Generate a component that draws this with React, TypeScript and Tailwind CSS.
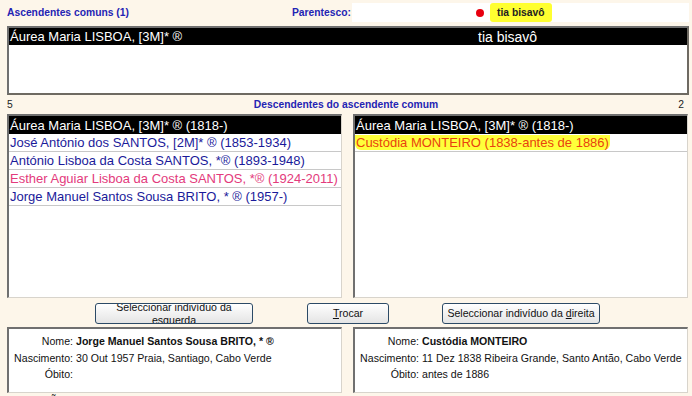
import React from 'react';

type Row = { text: string; color: string; selected?: boolean; marked?: boolean };

const leftRows: Row[] = [
  { text: 'Áurea Maria LISBOA, [3M]* ® (1818-)', color: '#ffffff', selected: true },
  { text: 'José António dos SANTOS, [2M]* ® (1853-1934)', color: '#1a1a9a' },
  { text: 'António Lisboa da Costa SANTOS, *® (1893-1948)', color: '#1a1a9a' },
  { text: 'Esther Aguiar Lisboa da Costa SANTOS, *® (1924-2011)', color: '#e33a7c' },
  { text: 'Jorge Manuel Santos Sousa BRITO, * ® (1957-)', color: '#1a1a9a' },
];

const rightRows: Row[] = [
  { text: 'Áurea Maria LISBOA, [3M]* ® (1818-)', color: '#ffffff', selected: true },
  { text: 'Custódia MONTEIRO (1838-antes de 1886)', color: '#e8420e', marked: true },
];

const sunken =
  'bg-white border-l-2 border-t-2 border-l-[#707070] border-t-[#707070] border-r border-b border-r-[#d8d4cc] border-b-[#d8d4cc]';

function PersonList({ rows }: { rows: Row[] }) {
  return (
    <div className={'w-[335px] h-full overflow-hidden ' + sunken}>
      {rows.map((r, i) => (
        <div
          key={i}
          className={
            'h-[18px] flex items-center pl-[1px] text-[13px] leading-none whitespace-nowrap ' +
            (r.selected ? 'bg-black' : 'border-b border-[#c8c8c8]')
          }
          style={{ color: r.color }}
        >
          <span className={r.marked ? 'bg-[#ffff3a] rounded-b-[6px] px-[1px] -ml-[1px] py-[1px]' : ''}>{r.text}</span>
        </div>
      ))}
    </div>
  );
}

function Detail({ name, birth, death }: { name: string; birth: string; death: string }) {
  return (
    <div className={'w-[335px] h-full overflow-hidden pt-[5px] text-[10.6px] text-[#111] ' + sunken}>
      <div className="grid grid-cols-[64px_1fr] gap-x-[3px] gap-y-[2.5px] leading-[14px]">
        <div className="text-right whitespace-nowrap">Nome:</div>
        <div className="font-bold whitespace-nowrap">{name}</div>
        <div className="text-right whitespace-nowrap">Nascimento:</div>
        <div className="whitespace-nowrap">{birth}</div>
        <div className="text-right whitespace-nowrap">Óbito:</div>
        <div className="whitespace-nowrap">{death}</div>
      </div>
    </div>
  );
}

function Btn({ children, className }: { children: React.ReactNode; className: string }) {
  return (
    <div
      className={
        'h-[21px] shrink-0 rounded-[3px] border border-[#2c4a66] bg-gradient-to-b from-white to-[#e4e4e4] flex items-center justify-center text-[10.6px] text-[#111] overflow-hidden whitespace-nowrap ' +
        className
      }
    >
      {children}
    </div>
  );
}

export default function App() {
  return (
    <div
      className="w-[692px] h-[396px] bg-[#fdf6ea] overflow-hidden flex flex-col"
      style={{ fontFamily: '"Liberation Sans", Arial, sans-serif' }}
    >
      {/* header */}
      <div className="h-[26px] shrink-0 flex items-start pt-[3px] pl-[7px] pr-[3px]">
        <div className="w-[285px] shrink-0 h-[19px] flex items-center text-[10.3px] font-bold text-[#2424b4] whitespace-nowrap">
          Ascendentes comuns (1)
        </div>
        <div className="w-[60px] shrink-0 h-[19px] flex items-center text-[10.3px] font-bold text-[#2424b4] whitespace-nowrap">
          Parentesco:
        </div>
        <div className="flex-1 h-[19px] bg-white flex items-center pl-[124px]">
          <span className="w-[8px] h-[8px] rounded-full bg-[#e8000f]" />
          <span className="ml-[6px] h-[19px] px-[7px] bg-[#ffff30] rounded-[3px] flex items-center text-[10.3px] font-bold text-[#222]">
            tia bisavô
          </span>
        </div>
      </div>

      {/* common ancestors */}
      <div className="shrink-0 mx-[7px] w-[682px] h-[69px] bg-white border-2 border-t-[#707070] border-l-[#707070] border-r-[#6e6a62] border-b-[#6e6a62]">
        <div className="h-[17px] bg-black text-white text-[13px] leading-none flex items-center whitespace-nowrap">
          <span className="w-[469px] pl-[1px]">Áurea Maria LISBOA, [3M]* ®</span>
          <span className="text-[14px]">tia bisavô</span>
        </div>
      </div>

      {/* counts row */}
      <div className="h-[19px] shrink-0 flex items-center justify-between px-[7px] text-[10.3px] font-bold">
        <span className="w-[20px] text-[#222] font-normal">5</span>
        <span className="text-[#2424b4]">Descendentes do ascendente comum</span>
        <span className="w-[20px] text-right text-[#222] font-normal pr-[1px]">2</span>
      </div>

      {/* lists */}
      <div className="h-[184px] shrink-0 flex gap-[11px] pl-[7px]">
        <PersonList rows={leftRows} />
        <PersonList rows={rightRows} />
      </div>

      {/* buttons */}
      <div className="h-[29px] shrink-0 flex items-start pt-[5px]">
        <Btn className="ml-[95px] w-[158px] flex-col leading-[13px] justify-start">
          <span className="-mt-[3px]">Seleccionar indivíduo da</span>
          <span>
            es<span className="underline">q</span>uerda
          </span>
        </Btn>
        <Btn className="ml-[54px] w-[82px]">
          <span>
            <span className="underline">T</span>rocar
          </span>
        </Btn>
        <Btn className="ml-[53px] w-[158px]">
          <span>
            Seleccionar indivíduo da <span className="underline">d</span>ireita
          </span>
        </Btn>
      </div>

      {/* details */}
      <div className="h-[66px] shrink-0 flex gap-[11px] pl-[7px]">
        <Detail name="Jorge Manuel Santos Sousa BRITO, * ®" birth="30 Out 1957 Praia, Santiago, Cabo Verde" death="" />
        <Detail name="Custódia MONTEIRO" birth="11 Dez 1838 Ribeira Grande, Santo Antão, Cabo Verde" death="antes de 1886" />
      </div>
      <div className="shrink-0 pl-[50px] text-[11px] text-[#222] leading-[14px]">Ã</div>
    </div>
  );
}
